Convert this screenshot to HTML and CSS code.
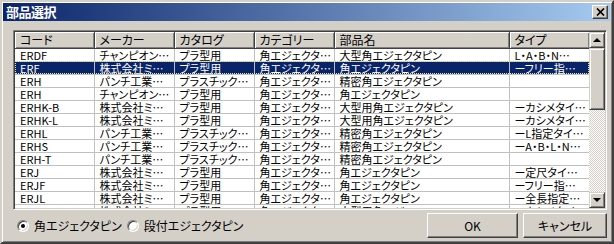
FILE: index.html
```html
<!DOCTYPE html>
<html lang="ja">
<head>
    <meta charset="UTF-8">
    <title>部品選択</title>
    <link rel="stylesheet" href="styles.css">
</head>
<body>
    <div class="window">
        <div class="titlebar">
            <span class="title">部品選択</span>
            <div class="close-btn">
                <svg width="9" height="8" viewBox="0 0 9 8"><path d="M1 0.5 L8 7.5 M8 0.5 L1 7.5" stroke="#000" stroke-width="1.7" fill="none"/></svg>
            </div>
        </div>

        <div class="listview">
            <div class="list-area">
                <table class="grid">
                    <colgroup>
                        <col style="width:79px"><col style="width:80px"><col style="width:80px">
                        <col style="width:80px"><col style="width:175px"><col style="width:80px">
                    </colgroup>
                    <thead>
                        <tr><th>コード</th><th>メーカー</th><th>カタログ</th><th>カテゴリー</th><th>部品名</th><th>タイプ</th></tr>
                    </thead>
                    <tbody>
                        <tr><td>ERDF</td><td>チャンピオン…</td><td>プラ型用</td><td>角エジェクタ…</td><td>大型角エジェクタピン</td><td>L・A・B・N…</td></tr>
                        <tr class="selected"><td>ERF</td><td>株式会社ミ…</td><td>プラ型用</td><td>角エジェクタ…</td><td>角エジェクタピン</td><td>ーフリー指…</td></tr>
                        <tr><td>ERH</td><td>パンチ工業…</td><td>プラスチック…</td><td>角エジェクタ…</td><td>精密角エジェクタピン</td><td></td></tr>
                        <tr><td>ERH</td><td>チャンピオン…</td><td>プラ型用</td><td>角エジェクタ…</td><td>角エジェクタピン</td><td></td></tr>
                        <tr><td>ERHK-B</td><td>株式会社ミ…</td><td>プラ型用</td><td>角エジェクタ…</td><td>大型用角エジェクタピン</td><td>ーカシメタイ…</td></tr>
                        <tr><td>ERHK-L</td><td>株式会社ミ…</td><td>プラ型用</td><td>角エジェクタ…</td><td>大型用角エジェクタピン</td><td>ーカシメタイ…</td></tr>
                        <tr><td>ERHL</td><td>パンチ工業…</td><td>プラスチック…</td><td>角エジェクタ…</td><td>精密角エジェクタピン</td><td>ーL指定タイ…</td></tr>
                        <tr><td>ERHS</td><td>パンチ工業…</td><td>プラスチック…</td><td>角エジェクタ…</td><td>精密角エジェクタピン</td><td>ーA・B・L・N…</td></tr>
                        <tr><td>ERH-T</td><td>パンチ工業…</td><td>プラスチック…</td><td>角エジェクタ…</td><td>精密角エジェクタピン</td><td></td></tr>
                        <tr><td>ERJ</td><td>株式会社ミ…</td><td>プラ型用</td><td>角エジェクタ…</td><td>角エジェクタピン</td><td>ー定尺タイ…</td></tr>
                        <tr><td>ERJF</td><td>株式会社ミ…</td><td>プラ型用</td><td>角エジェクタ…</td><td>角エジェクタピン</td><td>ーフリー指…</td></tr>
                        <tr><td>ERJL</td><td>株式会社ミ…</td><td>プラ型用</td><td>角エジェクタ…</td><td>角エジェクタピン</td><td>ー全長指定…</td></tr>
                        <tr><td>ERJS</td><td>株式会社ミ…</td><td>プラ型用</td><td>角エジェクタ…</td><td>大型用角エジェ…</td><td>ーカシメタイ…</td></tr>
                    </tbody>
                </table>
            </div>
            <div class="scrollbar">
                <div class="sb-btn"><span class="arrow-up"></span></div>
                <div class="sb-track">
                    <div class="sb-thumb"></div>
                </div>
                <div class="sb-btn"><span class="arrow-down"></span></div>
            </div>
        </div>

        <div class="footer">
            <label class="radio-item"><span class="radio checked"></span>角エジェクタピン</label>
            <label class="radio-item"><span class="radio"></span>段付エジェクタピン</label>
            <div class="buttons">
                <div class="btn btn-ok">OK</div>
                <div class="btn btn-cancel">キャンセル</div>
            </div>
        </div>
    </div>
</body>
</html>
```

FILE: styles.css
```css
body {
    margin: 0;
    background: #d4d0c8;
}

.window {
    width: 614px;
    height: 244px;
    box-sizing: border-box;
    background: #d4d0c8;
    border: 2px solid;
    border-color: #d4d0c8 #404040 #404040 #d4d0c8;
    box-shadow: inset 1px 1px #fff, inset -1px -1px #808080;
    padding: 1px 2px 1px 1px;
    font-family: "Noto Sans CJK JP", sans-serif;
    font-size: 12px;
    font-feature-settings: "palt";
    color: #000;
    display: flex;
    flex-direction: column;
}

.titlebar {
    height: 18px;
    flex: none;
    display: flex;
    align-items: center;
    justify-content: space-between;
    background: linear-gradient(to right, #0a246a, #a6caf0);
    padding: 0 2px 0 3px;
}

.title {
    color: #fff;
    font-weight: bold;
    font-size: 13px;
    line-height: 16px;
    letter-spacing: -0.5px;
}

.close-btn {
    width: 16px;
    height: 14px;
    box-sizing: border-box;
    background: #d4d0c8;
    border: 1px solid;
    border-color: #fff #404040 #404040 #fff;
    box-shadow: inset -1px -1px #808080;
    display: flex;
    align-items: center;
    justify-content: center;
}

.listview {
    margin: 9px 0 0 10px;
    width: 594px;
    height: 180px;
    box-sizing: border-box;
    border: 1px solid;
    border-color: #808080 #fff #fff #808080;
    box-shadow: inset 1px 1px #404040, inset -1px -1px #d4d0c8;
    padding: 1px;
    display: flex;
    background: #fff;
}

.list-area {
    width: 574px;
    height: 176px;
    overflow: hidden;
}

.grid {
    border-collapse: collapse;
    table-layout: fixed;
    width: 574px;
    font-size: 11px;
}

.grid th {
    height: 16px;
    box-sizing: border-box;
    padding: 0 0 0 5px;
    background: #d4d0c8;
    font-weight: normal;
    font-size: 12px;
    text-align: left;
    line-height: 14px;
    border-right: 1px solid #404040;
    border-bottom: 1px solid #404040;
    box-shadow: inset 1px 1px #fff, inset -1px -1px #808080;
    white-space: nowrap;
}

.grid td {
    height: 13px;
    box-sizing: border-box;
    padding: 0 0 0 5px;
    line-height: 12px;
    border-right: 1px solid #c0c0c0;
    border-bottom: 1px solid #c0c0c0;
    white-space: nowrap;
}

.grid tr.selected td {
    background: #0a246a;
    color: #fff;
}

.grid tr.selected {
    outline: 1px dotted #e8e490;
    outline-offset: -1px;
}

.scrollbar {
    width: 16px;
    display: flex;
    flex-direction: column;
}

.sb-btn {
    width: 16px;
    height: 16px;
    flex: none;
    box-sizing: border-box;
    background: #d4d0c8;
    border: 1px solid;
    border-color: #d4d0c8 #404040 #404040 #d4d0c8;
    box-shadow: inset 1px 1px #fff, inset -1px -1px #808080;
    display: flex;
    align-items: center;
    justify-content: center;
}

.arrow-up {
    border-left: 4px solid transparent;
    border-right: 4px solid transparent;
    border-bottom: 4px solid #000;
}

.arrow-down {
    border-left: 4px solid transparent;
    border-right: 4px solid transparent;
    border-top: 4px solid #000;
}

.sb-track {
    flex: 1;
    background: repeating-conic-gradient(#d4d0c8 0 25%, #fff 0 50%) 0 0 / 2px 2px;
}

.sb-thumb {
    height: 62px;
    box-sizing: border-box;
    background: #d4d0c8;
    border: 1px solid;
    border-color: #d4d0c8 #404040 #404040 #d4d0c8;
    box-shadow: inset 1px 1px #fff, inset -1px -1px #808080;
}

.footer {
    display: flex;
    align-items: center;
    margin: 3px 0 0 14px;
    height: 25px;
}

.radio-item {
    display: flex;
    align-items: center;
    gap: 5px;
    margin-right: 5px;
    line-height: 14px;
}

.radio {
    width: 12px;
    height: 12px;
    box-sizing: border-box;
    border-radius: 50%;
    background: #fff;
    border: 1px solid;
    border-color: #808080 #fff #fff #808080;
    box-shadow: inset 1px 1px #404040, inset -1px -1px #d4d0c8;
    display: flex;
    align-items: center;
    justify-content: center;
}

.radio.checked::after {
    content: "";
    width: 4px;
    height: 4px;
    border-radius: 50%;
    background: #000;
}

.buttons {
    margin-left: auto;
    display: flex;
    gap: 5px;
    margin-right: 3px;
}

.btn {
    height: 25px;
    box-sizing: border-box;
    background: #d4d0c8;
    border: 1px solid;
    border-color: #fff #404040 #404040 #fff;
    box-shadow: inset -1px -1px #808080;
    display: flex;
    align-items: center;
    justify-content: center;
}

.btn-ok {
    width: 91px;
}

.btn-cancel {
    width: 84px;
}
```
